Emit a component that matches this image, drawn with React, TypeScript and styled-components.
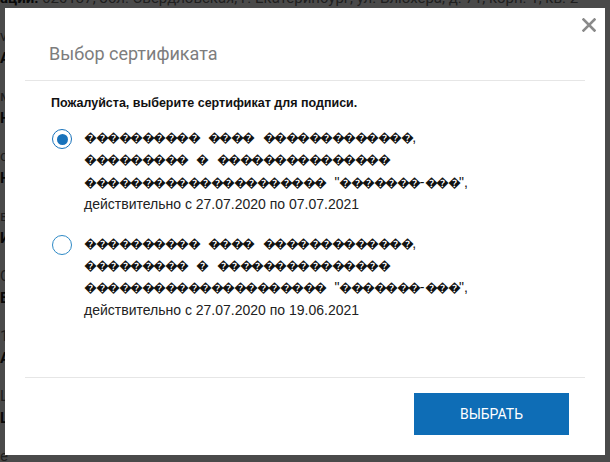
import styled, { createGlobalStyle } from "styled-components";
import { useState } from "react";

const GlobalStyle = createGlobalStyle`
  html, body {
    margin: 0;
    padding: 0;
    height: 100%;
    overflow: hidden;
  }

  body {
    background: #fff;
    font-family: "Liberation Sans", Arial, sans-serif;
  }
`;

const Page = styled.div`
  height: 100vh;
  overflow: hidden;
  display: flex;
  flex-direction: column;
  gap: 18px;
  font-family: Roboto, "Liberation Sans", sans-serif;
  font-size: 15px;
  line-height: 20px;
  color: #6a6a6a;

  & > :first-child {
    margin-top: -12px;
  }
`;

const Field = styled.div`
  display: flex;
  flex-direction: column;
  gap: 2px;
`;

const FieldLabel = styled.span`
  font-weight: 700;
  color: #1e1e1e;
`;

const Overlay = styled.div`
  position: fixed;
  inset: 0;
  background: rgba(0, 0, 0, 0.71);
  display: flex;
  justify-content: center;
  align-items: flex-start;
  padding-top: 8px;
`;

const Dialog = styled.div`
  position: relative;
  width: 600px;
  height: 447px;
  background: #fff;
  display: flex;
  flex-direction: column;
`;

const CloseButton = styled.button`
  position: absolute;
  top: 7px;
  right: 6px;
  width: 20px;
  height: 20px;
  padding: 0;
  border: none;
  background: none;
  cursor: pointer;
  display: flex;
  align-items: center;
  justify-content: center;
  color: #8a8a8a;

  &:hover {
    color: #555;
  }
`;

const Header = styled.div`
  margin: 0 20px;
  padding: 35px 24px 0;
  height: 73px;
  box-sizing: border-box;
  border-bottom: 1px solid #e6e6e6;
`;

const Title = styled.h2`
  margin: 0;
  font-family: Roboto, "Liberation Sans", sans-serif;
  font-size: 18px;
  line-height: 22px;
  font-weight: 400;
  color: #7d7d7d;
`;

const Body = styled.div`
  flex: 1;
  margin: 0 20px;
  padding: 14px 26px 0;
`;

const Hint = styled.p`
  margin: 0;
  font-size: 12.5px;
  line-height: 16px;
  font-weight: 700;
  color: #111;
`;

const CertList = styled.div`
  display: flex;
  flex-direction: column;
  gap: 16px;
  margin-top: 15px;
`;

const CertOption = styled.label`
  display: flex;
  align-items: flex-start;
  gap: 12px;
  cursor: pointer;
`;

const Radio = styled.span<{ $checked: boolean }>`
  flex: none;
  box-sizing: border-box;
  width: 20px;
  height: 20px;
  margin: 3px 0 0 1px;
  border-radius: 50%;
  border: ${(p) => (p.$checked ? "1.8px solid #1872bb" : "1.3px solid #2f8ac6")};
  display: flex;
  align-items: center;
  justify-content: center;

  &::after {
    content: "";
    width: 11px;
    height: 11px;
    border-radius: 50%;
    background: #1872bb;
    display: ${(p) => (p.$checked ? "block" : "none")};
  }
`;

const CertText = styled.div`
  font-size: 14px;
  line-height: 22.4px;
  color: #111;
`;

const CertLine = styled.div`
  height: 22.4px;
  word-spacing: 5px;
  white-space: nowrap;
`;

const Garbled = styled.span`
  font-size: 13px;
  letter-spacing: -1.5px;
`;

const Validity = styled.div`
  color: #222;
`;

const Footer = styled.div`
  margin: 0 20px;
  height: 78px;
  box-sizing: border-box;
  border-top: 1px solid #e6e6e6;
  padding: 15px 16px 0 0;
  display: flex;
  justify-content: flex-end;
  align-items: flex-start;
`;

const SelectButton = styled.button`
  width: 155px;
  height: 42px;
  border: none;
  background: #0e6db6;
  color: #fff;
  font-family: Roboto, "Liberation Sans", sans-serif;
  font-size: 14px;
  text-transform: uppercase;
  cursor: pointer;

  &:hover {
    background: #0b5f9f;
  }
`;

const R = "\uFFFD";
const g = (n: number) => R.repeat(n);

// the subject name comes in a wrong code page, so it shows as replacement marks
const subjectLines = [
  `${g(10)} ${g(4)} ${g(13)},`,
  `${g(9)} ${g(1)} ${g(15)}`,
  `${g(21)} "${g(7)}-${g(3)}",`,
];

const certificates = [
  { id: 1, lines: subjectLines, validity: "действительно с 27.07.2020 по 07.07.2021" },
  { id: 2, lines: subjectLines, validity: "действительно с 27.07.2020 по 19.06.2021" },
];

const pageFields = [
  ["ации: ", "620137, обл. Свердловская, г. Екатеринбург, ул. Блюхера, д. 71, корп. 1, кв. 2"],
  ["Адрес", "veб-сайт организации"],
  ["Номер телефона", "маркетинг"],
  ["Наименование", "сотрудник"],
  ["ИНН", "в"],
  ["Банк", "Счёт"],
  ["Адрес", "1"],
  ["Шифр", "Lс"],
  ["Дата", "е"],
];

function renderLine(text: string) {
  return text.split(/([^\uFFFD]+)/).map((part, i) =>
    part.includes(R) ? <Garbled key={i}>{part}</Garbled> : part
  );
}

export default function App() {
  const [selected, setSelected] = useState(1);

  return (
    <>
      <GlobalStyle />
      <Page>
        {pageFields.map(([label, value], i) =>
          i === 0 ? (
            <div key={i}>
              <FieldLabel>{label}</FieldLabel>
              {value}
            </div>
          ) : (
            <Field key={i}>
              <span>{value}</span>
              <FieldLabel>{label}</FieldLabel>
            </Field>
          )
        )}
      </Page>

      <Overlay>
        <Dialog>
          <CloseButton aria-label="Закрыть">
            <svg width="14" height="14" viewBox="0 0 14 14">
              <path
                d="M1.5 1.5 L12.5 12.5 M12.5 1.5 L1.5 12.5"
                stroke="currentColor"
                strokeWidth="2.6"
                strokeLinecap="square"
              />
            </svg>
          </CloseButton>

          <Header>
            <Title>Выбор сертификата</Title>
          </Header>

          <Body>
            <Hint>Пожалуйста, выберите сертификат для подписи.</Hint>
            <CertList>
              {certificates.map((c) => (
                <CertOption key={c.id} onClick={() => setSelected(c.id)}>
                  <Radio $checked={selected === c.id} />
                  <CertText>
                    {c.lines.map((l, i) => (
                      <CertLine key={i}>{renderLine(l)}</CertLine>
                    ))}
                    <Validity>{c.validity}</Validity>
                  </CertText>
                </CertOption>
              ))}
            </CertList>
          </Body>

          <Footer>
            <SelectButton>Выбрать</SelectButton>
          </Footer>
        </Dialog>
      </Overlay>
    </>
  );
}
